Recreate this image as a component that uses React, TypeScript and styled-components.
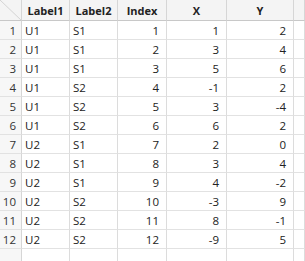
import React from 'react'
import styled, { createGlobalStyle } from 'styled-components'

const GlobalStyle = createGlobalStyle`
  html, body {
    margin: 0;
    padding: 0;
    background: #ffffff;
  }
  body {
    font-family: "Open Sans", "Noto Sans", sans-serif;
    font-size: 11.5px;
    color: #222222;
  }
`

const columns = [
  { key: 'Label1', align: 'left' },
  { key: 'Label2', align: 'left' },
  { key: 'Index', align: 'right' },
  { key: 'X', align: 'right' },
  { key: 'Y', align: 'right' },
] as const

const rows = [
  ['U1', 'S1', 1, 1, 2],
  ['U1', 'S1', 2, 3, 4],
  ['U1', 'S1', 3, 5, 6],
  ['U1', 'S2', 4, -1, 2],
  ['U1', 'S2', 5, 3, -4],
  ['U1', 'S2', 6, 6, 2],
  ['U2', 'S1', 7, 2, 0],
  ['U2', 'S1', 8, 3, 4],
  ['U2', 'S1', 9, 4, -2],
  ['U2', 'S2', 10, -3, 9],
  ['U2', 'S2', 11, 8, -1],
  ['U2', 'S2', 12, -9, 5],
]

const App = () => {
  return (
    <>
      <GlobalStyle />
      <Grid>
        <Corner>
          <svg width="22" height="21" viewBox="0 0 22 21">
            <line x1="0" y1="0" x2="22" y2="21" stroke="#d4d4d4" strokeWidth="1" />
          </svg>
        </Corner>
        {columns.map((c) => (
          <HeadCell key={c.key}>{c.key}</HeadCell>
        ))}
        <HeadCell />
        {rows.map((r, i) => (
          <React.Fragment key={i}>
            <RowNum>{i + 1}</RowNum>
            {r.map((v, j) => (
              <Cell key={j} $align={columns[j].align}>
                {v}
              </Cell>
            ))}
            <Cell $align="left" />
          </React.Fragment>
        ))}
        <RowNum />
        {columns.map((c) => (
          <Cell key={c.key} $align="left" />
        ))}
        <Cell $align="left" />
      </Grid>
    </>
  )
}

export default App

const Grid = styled.div`
  display: grid;
  grid-template-columns: 22px 48px 48px 49px 60px 67px 1fr;
  grid-template-rows: 21px repeat(13, 19px);
  width: 305px;
  height: 261px;
  overflow: hidden;
`

const Corner = styled.div`
  background: #f4f4f4;
  border-right: 1px solid #d6d6d6;
  border-bottom: 1px solid #c8c8c8;
  box-sizing: border-box;
  overflow: hidden;

  svg {
    display: block;
  }
`

const HeadCell = styled.div`
  display: flex;
  align-items: center;
  justify-content: center;
  background: #f4f4f4;
  border-right: 1px solid #d6d6d6;
  border-bottom: 1px solid #c8c8c8;
  box-sizing: border-box;
  font-size: 11px;
  font-weight: 700;
  white-space: nowrap;
`

const RowNum = styled.div`
  display: flex;
  align-items: center;
  justify-content: flex-end;
  padding-right: 5px;
  background: #f7f7f7;
  border-right: 1px solid #d6d6d6;
  border-bottom: 1px solid #e2e2e2;
  box-sizing: border-box;
  color: #333333;
`

const Cell = styled.div<{ $align: 'left' | 'right' }>`
  display: flex;
  align-items: center;
  justify-content: ${(p) => (p.$align === 'right' ? 'flex-end' : 'flex-start')};
  padding: ${(p) => (p.$align === 'right' ? '0 7px 0 0' : '0 0 0 3px')};
  background: #ffffff;
  border-right: 1px solid #dcdcdc;
  border-bottom: 1px solid #e2e2e2;
  box-sizing: border-box;
  white-space: nowrap;
`
